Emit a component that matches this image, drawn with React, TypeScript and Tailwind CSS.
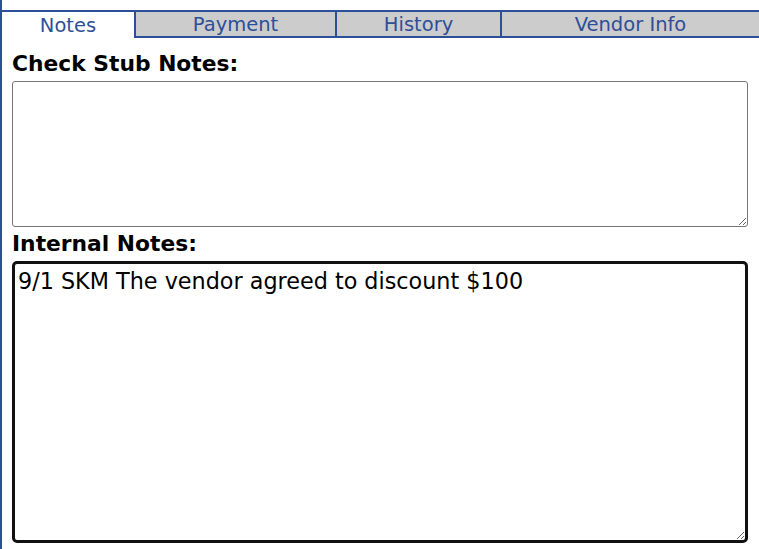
import { useEffect, useRef } from "react";

const tabs = [
  { name: "Notes", w: "w-[132px]" },
  { name: "Payment", w: "w-[201px]" },
  { name: "History", w: "w-[165px]" },
  { name: "Vendor Info", w: "flex-1" },
];

export default function App() {
  const ref = useRef<HTMLTextAreaElement>(null);

  useEffect(() => {
    const el = ref.current;
    if (el) {
      el.focus();
      el.setSelectionRange(el.value.length, el.value.length);
    }
  }, []);

  return (
    <div className="h-[549px] w-[759px] overflow-hidden bg-white font-['DejaVu_Sans',Verdana,sans-serif] border-l-2 border-[#2d4f98]">
      <div className="h-[10px]" />

      {/* TABS */}
      <div className="flex border-t-2 border-[#2d4f98]">
        {tabs.map((t, i) => (
          <div
            key={t.name}
            className={
              i === 0
                ? `${t.w} h-[26px] bg-white pt-[2px] text-center text-[19.5px] leading-[24px] text-[#2d4f98]`
                : `${t.w} h-[26px] bg-[#cccccc] border-l-2 border-b-2 border-[#2d4f98] pt-[2px] text-center text-[19.5px] leading-[22px] text-[#2d4f98]`
            }
          >
            {t.name}
          </div>
        ))}
      </div>

      {/* CONTENIDO */}
      <div className="pl-[10px] pr-[11px] pt-[13px]">
        <label className="block text-[21.8px] font-bold leading-[25px] text-black">
          Check Stub Notes:
        </label>
        <textarea className="mt-[5px] block h-[146px] w-full rounded-[3px] border border-[#767676] px-[3px] py-[3px] text-[22px] outline-none" />

        <label className="mt-[4px] block text-[21.8px] font-bold leading-[25px] text-black">
          Internal Notes:
        </label>
        <textarea
          ref={ref}
          defaultValue="9/1 SKM The vendor agreed to discount $100"
          className="mt-[5px] block h-[282px] w-full rounded-[5px] border-[3px] border-[#111111] px-[3px] py-[4px] text-[22.3px] leading-[27px] text-black caret-black outline-none"
        />
      </div>
    </div>
  );
}
